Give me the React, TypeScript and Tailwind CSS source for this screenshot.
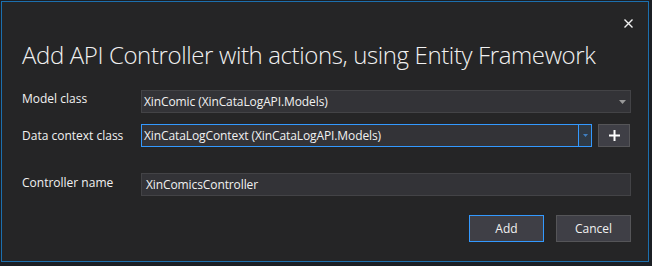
import React from 'react';

const ArrowDown = () => (
  <svg width="7" height="4" viewBox="0 0 7 4" className="block">
    <path d="M0 0 L7 0 L3.5 4 Z" fill="#999999" />
  </svg>
);

export default function App() {
  return (
    <div className="w-[652px] h-[266px] bg-[#1b1f24] pt-px pl-px overflow-hidden" style={{ fontFamily: '"Open Sans", "Noto Sans", sans-serif' }}>
      <div className="relative w-[648px] h-[261px] border border-[#1c6fae] bg-[#252526] text-[#f1f1f1] flex flex-col">
        {/* Close */}
        <button className="absolute top-[13px] right-[12px] w-[16px] h-[16px] flex items-center justify-center text-[#f1f1f1]">
          <svg width="9" height="9" viewBox="0 0 9 9">
            <path d="M0.5 0.5 L8.5 8.5 M8.5 0.5 L0.5 8.5" stroke="#f1f1f1" strokeWidth="1.4" />
          </svg>
        </button>

        <h1 className="mt-[37px] pl-[20px] text-[24px] leading-[32px] font-light tracking-[-0.38px] text-[#f1f1f1]">
          Add API Controller with actions, using Entity Framework
        </h1>

        {/* Form */}
        <div className="mt-[19px] pl-[20px] pr-[17px] flex flex-col text-[12px]">
          <div className="flex items-center h-[23px]">
            <span className="w-[119px] -mt-[6px]">Model class</span>
            <div className="flex-1 h-[23px] bg-[#333337] border border-[#434346] flex items-center pl-[2px] pr-[4px]">
              <span className="flex-1 tracking-[-0.1px]">XinComic (XinCataLogAPI.Models)</span>
              <ArrowDown />
            </div>
          </div>

          <div className="flex items-center h-[23px] mt-[11px]">
            <span className="w-[119px]">Data context class</span>
            <div className="w-[451px] h-[23px] bg-[#333337] border border-[#3399ff] flex items-stretch">
              <span className="flex-1 flex items-center pl-[2px] tracking-[-0.1px]">XinCataLogContext (XinCataLogAPI.Models)</span>
              <div className="w-[13px] border-l border-[#3399ff] bg-[#2f3a45] flex items-center justify-center">
                <svg width="5" height="3" viewBox="0 0 5 3" className="block">
                  <path d="M0 0 L5 0 L2.5 3 Z" fill="#3f7fbf" />
                </svg>
              </div>
            </div>
            <button className="ml-[6px] w-[32px] h-[23px] bg-[#3f3f46] border border-[#555558] flex items-center justify-center">
              <svg width="11" height="11" viewBox="0 0 11 11">
                <path d="M5.5 0 V11 M0 5.5 H11" stroke="#ffffff" strokeWidth="2" />
              </svg>
            </button>
          </div>

          <div className="flex items-center h-[23px] mt-[26px]">
            <span className="w-[119px] -mt-[3px]">Controller name</span>
            <div className="flex-1 h-[23px] bg-[#333337] border border-[#434346] flex items-center pl-[4px] tracking-[-0.1px]">
              XinComicsController
            </div>
          </div>
        </div>

        {/* Buttons */}
        <div className="mt-[19px] pr-[17px] flex justify-end gap-[12px] text-[12px]">
          <button className="w-[75px] h-[27px] bg-[#3f3f46] border border-[#3399ff] text-[#f1f1f1]">Add</button>
          <button className="w-[75px] h-[27px] bg-[#3f3f46] border border-[#555558] text-[#f1f1f1]">Cancel</button>
        </div>
      </div>
    </div>
  );
}
